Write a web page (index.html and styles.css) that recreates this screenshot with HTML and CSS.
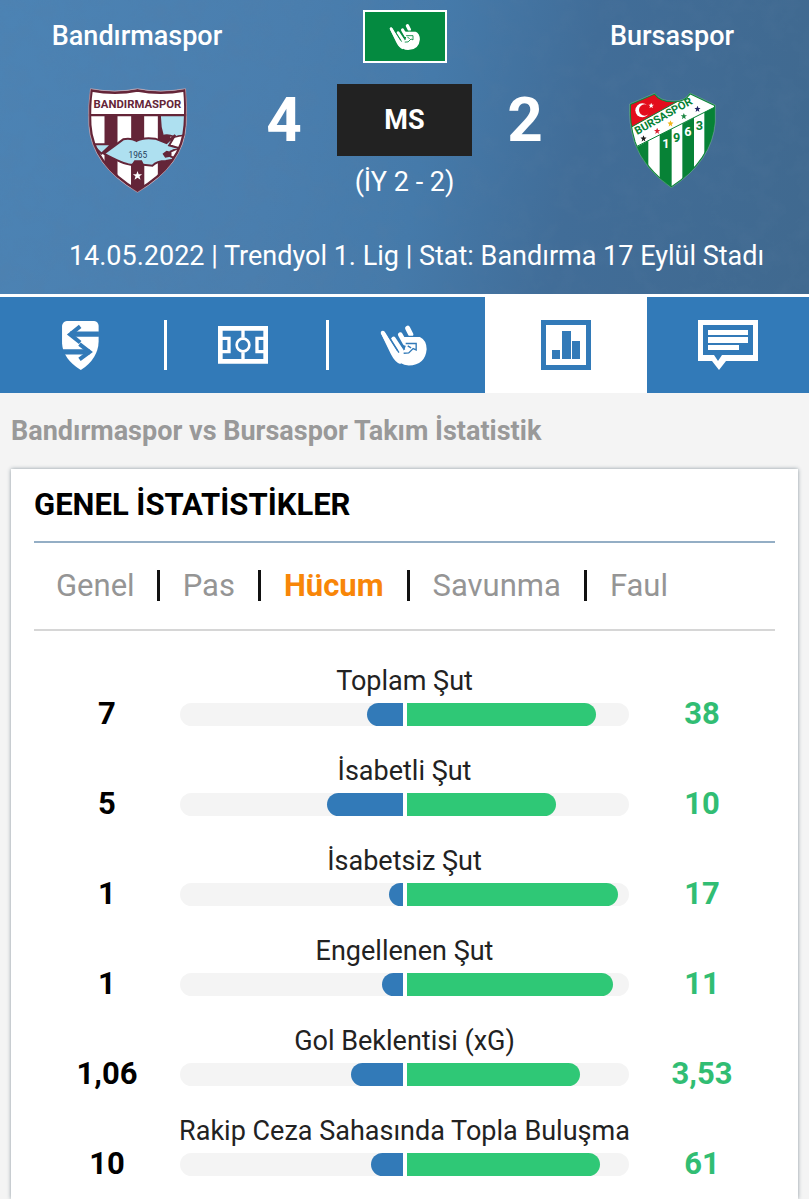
FILE: index.html
```html
<!DOCTYPE html>
<html lang="tr">
<head>
<meta charset="utf-8">
<meta name="viewport" content="width=device-width, initial-scale=1">
<title>Bandırmaspor vs Bursaspor</title>
<link rel="stylesheet" href="styles.css">
</head>
<body>
<svg class="defs" aria-hidden="true">
  <symbol id="hand" viewBox="20 26 142 126">
    <path class="ink-line" stroke-width="11" d="M28 51L68 126"/>
    <path class="ink" d="M22 52Q26 42 34 48L72 108L92 130L80 144Q64 138 52 114Z"/>
    <path class="ink-line" stroke-width="14" d="M60 70L84 106M80 57L94 82"/>
    <path class="ink-line" stroke-width="15" d="M102 38L111 56"/>
    <path class="ink" d="M60 112L76 100L88 108L96 92L88 64H138Q158 74 158 100Q154 147 105 148Q78 147 60 120Z"/>
    <path class="cut" d="M94 62H142M96 83H127V102L118 98L105 111L90 112M102 90L112 96M69 61L93 101M46 62L76 110"/>
  </symbol>
</svg>
<header class="match">
  <svg class="texture" aria-hidden="true">
    <filter id="grain" x="0" y="0" width="100%" height="100%">
      <feTurbulence type="fractalNoise" baseFrequency="0.045" numOctaves="5" seed="7"/>
      <feColorMatrix values="0 0 0 0 0.1  0 0 0 0 0.2  0 0 0 0 0.35  0.9 0 0 0 -0.36"/>
    </filter>
    <rect width="100%" height="100%" filter="url(#grain)"/>
  </svg>
  <div class="board">
    <h2 class="team">Bandırmaspor</h2>
    <button class="live" type="button" aria-label="Canlı anlatım"><svg class="live-icon"><use href="#hand"/></svg></button>
    <h2 class="team team-away">Bursaspor</h2>
    <div class="crest">
      <svg width="101" height="106" viewBox="36 36 302 318" role="img" aria-label="Bandırmaspor">
        <clipPath id="c1"><path d="M46 41Q120 55 187 41Q255 55 331 41Q336 90 333 150Q327 270 187 352Q48 270 41 150Q38 90 46 41Z"/></clipPath>
        <g clip-path="url(#c1)">
          <path fill="#fff" d="M36 36H340V356H36Z"/>
          <path fill="#642538" d="M88 118H127V354H88ZM168 118H207V354H168ZM248 118H286V354H248Z"/>
          <path fill="#aee0f0" stroke="#642538" stroke-width="5" d="M255 120H340V180L300 186Q272 176 264 184Q254 154 255 120Z"/>
          <path fill="#aee0f0" stroke="#642538" stroke-width="6" d="M50 208H109L79 236Z"/>
          <path fill="#fff" stroke="#642538" stroke-width="5" d="M272 205Q282 184 335 180L330 230L300 218Z"/>
          <path fill="#aee0f0" stroke="#642538" stroke-width="6" d="M86 236Q116 214 144 193Q166 188 184 198Q204 186 240 191L274 204L300 180L282 211L310 219L286 230L286 244L305 252L272 258Q245 258 232 272L204 269H166Q146 268 86 236Z"/>
          <path fill="#642538" d="M262 236L274 227L286 230V245L270 248ZM168 270L178 256H200L207 270V352H168Z"/>
          <path fill="#642538" d="M36 117H340V124H36Z"/>
          <path fill="#fff" d="M187 288L190.500 298H201L193 304L196 314L187 308L178 314L181 304L173 298H183.500Z"/>
        </g>
        <path fill="none" stroke="#642538" stroke-width="8" d="M49 46Q120 60 187 46Q255 60 328 46Q333 92 329 150Q323 267 187 347Q52 267 45 150Q42 90 49 46Z"/>
        <path fill="none" stroke="#c9a9b4" stroke-width="2" d="M46 41Q120 55 187 41Q255 55 331 41Q336 90 333 150Q327 270 187 352Q48 270 41 150Q38 90 46 41Z"/>
        <text class="crest-name" x="187" y="98" font-size="34">BANDIRMASPOR</text>
        <text class="crest-year" x="188" y="248" font-size="25">1965</text>
      </svg>
    </div>
    <p class="score">4</p>
    <div class="status">
      <p class="phase">MS</p>
      <p class="half">(İY 2 - 2)</p>
    </div>
    <p class="score">2</p>
    <div class="crest">
      <svg width="88" height="96" viewBox="42 40 262 288" role="img" aria-label="Bursaspor">
        <clipPath id="c2"><path d="M48 77L121 46Q138 70 178 69Q212 70 227 45L301 80V130Q292 245 171 325Q90 270 62 190Q44 130 48 77Z"/></clipPath>
        <g clip-path="url(#c2)">
          <path fill="#fff" d="M40 40H304V328H40Z"/>
          <path fill="#e30d1c" d="M40 40H235L225 48L40 152Z"/>
          <path fill="#078236" d="M40 220L102 186V330H40ZM136 169L172 151V330H136ZM204 135L239 117V330H204ZM270 101L304 84V330H270Z"/>
          <path fill="none" stroke="#078236" stroke-width="3" d="M46 148L228 47M60 207L304 84"/>
          <circle cx="84" cy="95" r="21" fill="#fff"/><circle cx="91" cy="94" r="17" fill="#e30d1c"/>
        </g>
        <path fill="none" stroke="#078236" stroke-width="4" d="M48 77L121 46Q138 70 178 69Q212 70 227 45L301 80V130Q292 245 171 325Q90 270 62 190Q44 130 48 77Z"/>
        <path fill="none" stroke="#b9d6c2" stroke-width="1" d="M46 76L121 44Q138 68 178 67Q212 68 227 43L303 79V130Q294 247 171 327Q88 271 60 190Q42 130 46 76Z"/>
        <symbol id="star" viewBox="0 0 20 20"><path d="M10 0L13 7H20L14 12L16 20L10 15L4 20L6 12L0 7H7Z"/></symbol>
        <use href="#star" x="102" y="72" width="17" height="17" fill="#fff"/>
        <use href="#star" x="78" y="170" width="19" height="19" fill="#1b1b1b"/>
        <use href="#star" x="119" y="147" width="19" height="19" fill="#d9202f"/>
        <use href="#star" x="159" y="125" width="19" height="19" fill="#f2b51c"/>
        <use href="#star" x="199" y="103" width="19" height="19" fill="#1c8743"/>
        <use href="#star" x="240" y="81" width="19" height="19" fill="#1f2464"/>
        <text class="crest-arc" transform="translate(69 169) rotate(-29.500)" font-size="33">BURSASPOR</text>
        <text class="crest-num crest-num-light" x="155" y="207" font-size="38">1</text>
        <text class="crest-num" x="187" y="191" font-size="38">9</text>
        <text class="crest-num crest-num-light" x="221" y="172" font-size="38">6</text>
        <text class="crest-num" x="255" y="155" font-size="38">3</text>
      </svg>
    </div>
  </div>
  <p class="info">14.05.2022 | Trendyol 1. Lig | Stat: Bandırma 17 Eylül Stadı</p>
</header>
<nav class="sections" aria-label="Maç">
  <a class="section" href="#ozet" aria-label="Karşılaştırma">
    <svg width="37" height="49" viewBox="0 0 110 146"><path fill="#fff" d="M14 0H96Q108 2 109 14V60Q108 112 56 146Q2 112 0 66V14Q2 2 14 0Z"/><path fill="none" stroke="#327ab8" stroke-width="12" d="M54 16L24 40L54 64M52 69L82 92L52 114"/><path fill="none" stroke="#327ab8" stroke-width="16" d="M24 39H110M0 92H82"/></svg>
  </a>
  <a class="section divided" href="#saha" aria-label="Kadrolar">
    <svg width="50" height="38" viewBox="0 0 150 114" fill="none" stroke="#fff"><path stroke-width="14" d="M7 7H143V106H7Z"/><path stroke-width="10" d="M75 12V35M75 79V102M12 37H33V77H12M138 37H117V77H138"/><circle cx="75" cy="57" r="19" stroke-width="8"/></svg>
  </a>
  <a class="section divided" href="#anlatim" aria-label="Canlı anlatım"><svg width="48" height="43"><use href="#hand"/></svg></a>
  <a class="section active" href="#istatistik" aria-label="İstatistik" aria-current="page">
    <svg width="50" height="50" viewBox="0 0 50 50"><path fill="none" stroke="#327ab8" stroke-width="5" d="M2.500 2.500H47.500V47.500H2.500Z"/><path fill="#327ab8" d="M11 30H19V39H11ZM21 11H30V39H21ZM31 21H39V39H31Z"/></svg>
  </a>
  <a class="section" href="#yorum" aria-label="Yorumlar">
    <svg width="60" height="50" viewBox="0 0 60 50"><path fill="#fff" fill-rule="evenodd" d="M0 0H60V41H28L21 50L14 41H0ZM5 5V35H16L20 41L24 35H55V5Z"/><path fill="#fff" d="M10 10H50V15H10ZM10 17H50V23H10ZM10 25H41V30H10Z"/></svg>
  </a>
</nav>
<main class="content">
  <h1 class="title">Bandırmaspor vs Bursaspor Takım İstatistik</h1>
  <section class="card">
    <h2 class="heading">GENEL İSTATİSTİKLER</h2>
    <div class="tabs" role="tablist">
      <button class="tab" type="button" role="tab">Genel</button>
      <button class="tab" type="button" role="tab">Pas</button>
      <button class="tab selected" type="button" role="tab" aria-selected="true">Hücum</button>
      <button class="tab" type="button" role="tab">Savunma</button>
      <button class="tab" type="button" role="tab">Faul</button>
    </div>
    <div class="stats">
      <div class="stat"><p class="label">Toplam Şut</p><b class="home">7</b><div class="bars"><div class="half-bar left"><div class="fill" style="width:16%"></div></div><div class="half-bar"><div class="fill" style="width:85%"></div></div></div><b class="away">38</b></div>
      <div class="stat"><p class="label">İsabetli Şut</p><b class="home">5</b><div class="bars"><div class="half-bar left"><div class="fill" style="width:34%"></div></div><div class="half-bar"><div class="fill" style="width:67%"></div></div></div><b class="away">10</b></div>
      <div class="stat"><p class="label">İsabetsiz Şut</p><b class="home">1</b><div class="bars"><div class="half-bar left"><div class="fill" style="width:6%"></div></div><div class="half-bar"><div class="fill" style="width:95%"></div></div></div><b class="away">17</b></div>
      <div class="stat"><p class="label">Engellenen Şut</p><b class="home">1</b><div class="bars"><div class="half-bar left"><div class="fill" style="width:9%"></div></div><div class="half-bar"><div class="fill" style="width:93%"></div></div></div><b class="away">11</b></div>
      <div class="stat"><p class="label">Gol Beklentisi (xG)</p><b class="home">1,06</b><div class="bars"><div class="half-bar left"><div class="fill" style="width:23%"></div></div><div class="half-bar"><div class="fill" style="width:78%"></div></div></div><b class="away">3,53</b></div>
      <div class="stat"><p class="label">Rakip Ceza Sahasında Topla Buluşma</p><b class="home">10</b><div class="bars"><div class="half-bar left"><div class="fill" style="width:14%"></div></div><div class="half-bar"><div class="fill" style="width:87%"></div></div></div><b class="away">61</b></div>
    </div>
  </section>
</main>
</body>
</html>
```

FILE: styles.css
```css
* { box-sizing: border-box; }
body {
  display: flex;
  flex-direction: column;
  min-height: 100vh;
  margin: 0;
  background: #f4f4f4;
  color: #222;
  font: 27px/32px Roboto, "Open Sans", sans-serif;
}
h1, h2, p { margin: 0; font-size: inherit; }
button { padding: 0; border: 0; background: none; color: inherit; font: inherit; cursor: pointer; }
svg { display: block; }
.defs { position: absolute; width: 0; height: 0; }
.ink { fill: #fff; }
.ink-line { fill: none; stroke: #fff; stroke-linecap: round; }
.cut { fill: none; stroke: var(--ground); stroke-width: 4; }

.match {
  position: relative;
  padding: 10px 0 22px;
  border-bottom: 3px solid #fff;
  background: linear-gradient(100deg, #4c83b4 0%, #4a7eae 35%, #457aaa 52%, #416d98 70%, #40698f 100%);
  color: #fff;
}
.texture { position: absolute; inset: 0; width: 100%; height: 100%; opacity: 0.4; }
.board {
  position: relative;
  display: grid;
  grid-template-columns: 1fr 68px 173px 68px 1fr;
  row-gap: 21px;
  padding: 0 24px;
  text-align: center;
}
.team { padding-top: 10px; font-weight: 500; }
.live {
  grid-column: 3;
  display: grid;
  place-items: center;
  justify-self: center;
  width: 84px;
  height: 53px;
  border: 2px solid #fff;
  background: #048a40;
  --ground: #048a40;
}
.live-icon { width: 32px; height: 28px; }
.team-away { grid-column: 5; }
.crest { display: grid; place-items: center; height: 112px; }
.crest-name, .crest-year, .crest-num { text-anchor: middle; }
.crest-name { fill: #642538; font-weight: 700; }
.crest-year { fill: #233a5a; }
.crest-arc { fill: #078236; font-weight: 700; }
.crest-num { fill: #078236; font-weight: 700; }
.crest-num-light { fill: #fff; }
.score { font-size: 62px; font-weight: 700; line-height: 72px; }
.phase { width: 135px; margin: 0 auto 10px; background: #222; font-weight: 700; line-height: 72px; }
.info { position: relative; padding: 42px 0 0 24px; text-align: center; }

.sections { display: grid; grid-template-columns: repeat(5, 1fr); background: #327ab8; --ground: #327ab8; }
.section { position: relative; display: grid; place-items: center; height: 96px; }
.active { background: #fff; }
.divided::before { content: ""; position: absolute; left: 2px; width: 3px; height: 50px; background: #fff; }

.content { display: flex; flex: 1; flex-direction: column; padding: 22px 11px 0; }
.title { color: #999; font-weight: 700; }
.card { flex: 1; margin-top: 22px; padding: 18px 23px 0; background: #fff; box-shadow: 0 0 4px #8a979f; }
.heading { padding-bottom: 18px; border-bottom: 2px solid #94aec5; color: #000; font-size: 31px; font-weight: 700; line-height: 36px; }
.tabs { display: flex; padding: 27px 0 28px; border-bottom: 2px solid #d6d6d6; color: #959595; font-size: 31px; line-height: 31px; }
.tab { padding: 0 23px; }
.tab:first-child { padding: 0 22px; }
.tab + .tab { border-left: 3px solid #111; }
.selected { color: #f88608; font-weight: 700; }
.stats { display: grid; gap: 29px; padding-top: 34px; }
.stat { display: grid; grid-template-columns: 146px 1fr 146px; row-gap: 6px; text-align: center; }
.label { grid-column: 1 / -1; }
.home, .away { font-size: 31px; line-height: 21px; }
.home { color: #000; }
.away { color: #31bd73; }
.bars { display: grid; grid-template-columns: 1fr 1fr; gap: 4px; }
.half-bar { height: 23px; overflow: hidden; border-radius: 0 12px 12px 0; background: #f4f4f4; }
.left { display: flex; justify-content: flex-end; border-radius: 12px 0 0 12px; }
.fill { height: 100%; border-radius: 0 12px 12px 0; background: #2fc876; }
.left .fill { border-radius: 12px 0 0 12px; background: #327ab8; }
```
